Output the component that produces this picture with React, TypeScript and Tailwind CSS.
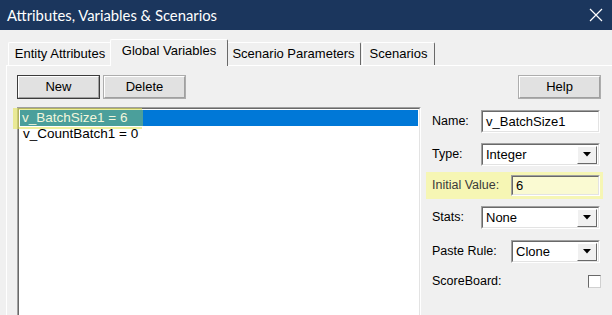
import React from 'react';

const sunken =
  'border border-t-[#a0a0a0] border-l-[#a0a0a0] border-r-white border-b-white';

const Btn = ({ label, isDefault = false }: { label: string; isDefault?: boolean }) => (
  <div
    className={`w-[83px] h-[24px] ${isDefault ? 'border border-[#3c3c3c]' : 'border border-[#adadad]'} bg-[#e1e1e1]`}
  >
    <div className="w-full h-full border border-t-white border-l-white border-r-[#a0a0a0] border-b-[#a0a0a0] flex items-center justify-center text-[13px] text-black">
      {label}
    </div>
  </div>
);

const Select = ({ value, width }: { value: string; width: string }) => (
  <div className={`${width} h-[23px] ${sunken} bg-white`}>
    <div className="w-full h-full border border-t-[#696969] border-l-[#696969] border-r-[#e3e3e3] border-b-[#e3e3e3] flex items-center justify-between pl-[3px] pr-[1px]">
      <span className="text-[13px] text-black">{value}</span>
      <div className="w-[20px] h-[18px] bg-[#f0f0f0] border border-t-white border-l-white border-r-[#696969] border-b-[#696969] flex items-center justify-center">
        <svg width="8" height="5" viewBox="0 0 8 5">
          <path d="M0 0 H8 L4 4.5 Z" fill="#000" />
        </svg>
      </div>
    </div>
  </div>
);

const TextBox = ({ value, width, bg = 'bg-white', h = 'h-[23px]' }: { value: string; width: string; bg?: string; h?: string }) => (
  <div className={`${width} ${h} ${sunken} ${bg}`}>
    <div className="w-full h-full border border-t-[#696969] border-l-[#696969] border-r-[#e3e3e3] border-b-[#e3e3e3] flex items-center pl-[3px]">
      <span className="text-[13px] text-black">{value}</span>
    </div>
  </div>
);

const Tab = ({ label, width, selected = false }: { label: string; width: string; selected?: boolean }) => (
  <div
    className={`${width} ${selected ? 'h-[27px] -mb-px z-10 -mx-[2px] pb-[4px]' : 'h-[23px] pb-[1px]'} bg-[#f0f0f0] border-t border-l border-white border-r border-r-[#696969] rounded-t-[2px] flex items-center justify-center text-[13px] text-black`}
  >
    {label}
  </div>
);

export default function App() {
  return (
    <div
      className="w-[612px] h-[315px] overflow-hidden bg-[#f0f0f0] flex flex-col"
      style={{ fontFamily: '"Liberation Sans", Arial, sans-serif' }}
    >
      <div className="h-[30px] shrink-0 bg-[#1b365d] flex items-center justify-between pl-[7px] pr-[9px]">
        <span className="text-white text-[14.8px]" style={{ fontFamily: 'Lato, "Noto Sans", sans-serif' }}>
          Attributes, Variables &amp; Scenarios
        </span>
        <svg width="14" height="14" viewBox="0 0 14 14">
          <path d="M1 1 L13 13 M13 1 L1 13" stroke="#fff" strokeWidth="1.2" />
        </svg>
      </div>

      <div className="flex-1 pl-[6px] pt-[9px] flex flex-col">
        <div className="flex items-end pl-[2px] relative">
          <Tab label="Entity Attributes" width="w-[104px]" />
          <Tab label="Global Variables" width="w-[118px]" selected />
          <Tab label="Scenario Parameters" width="w-[135px]" />
          <div className="w-[1px]" />
          <Tab label="Scenarios" width="w-[73px]" />
        </div>

        <div className="flex-1 border-t border-l border-white pl-[10px] pt-[9px]">
          <div className="w-[584px] flex justify-between">
            <div className="flex gap-[3px]">
              <Btn label="New" isDefault />
              <Btn label="Delete" />
            </div>
            <Btn label="Help" />
          </div>

          <div className="flex mt-[8px]">
            <div className="relative w-[404px] h-[220px] border border-t-[#a0a0a0] border-l-[#a0a0a0] border-r-white border-b-white">
              <div className="w-full h-full border border-t-[#696969] border-l-[#696969] border-r-[#e3e3e3] border-b-[#e3e3e3] bg-white pt-px pl-px pr-px">
                <div className="h-[16px] flex bg-[#0078d7] text-[13.5px] leading-[16px]">
                  <div className="w-[123px] bg-[#4b9f9b] pl-[2px] text-[#f2f6dc]">v_BatchSize1 = 6</div>
                </div>
                <div className="h-[16px] pl-[3px] text-[13.5px] leading-[16px] text-black">v_CountBatch1 = 0</div>
              </div>
              <div className="absolute -left-[5px] top-0 w-[129px] h-[21px] border-y-2 border-l-[6px] border-r-0 border-[#e4e45a]/60 pointer-events-none" />
            </div>

            <div className="ml-[5px] w-[177px] flex flex-col pt-[3px]">
              <div className="flex items-center justify-between pl-[6px] pr-[3px]">
                <span className="text-[12.5px] text-black">Name:</span>
                <TextBox value="v_BatchSize1" width="w-[119px]" />
              </div>
              <div className="flex items-center justify-between pl-[6px] pr-[3px] mt-[10px]">
                <span className="text-[12.5px] text-black">Type:</span>
                <Select value="Integer" width="w-[119px]" />
              </div>
              <div className="flex items-center justify-between pl-[6px] pr-[3px] mt-[6px] h-[27px] bg-[#f6f6b4]">
                <span className="text-[12.5px] text-[#3a3a3a]">Initial Value:</span>
                <TextBox value="6" width="w-[89px]" h="h-[21px]" bg="bg-[#fafad2]" />
              </div>
              <div className="flex items-center justify-between pl-[6px] pr-[3px] mt-[7px]">
                <span className="text-[12.5px] text-black">Stats:</span>
                <Select value="None" width="w-[119px]" />
              </div>
              <div className="flex items-center justify-between pl-[6px] pr-[3px] mt-[11px]">
                <span className="text-[12.5px] text-black">Paste Rule:</span>
                <Select value="Clone" width="w-[89px]" />
              </div>
              <div className="flex items-center justify-between pl-[6px] pr-[2px] mt-[9px]">
                <span className="text-[12.5px] text-black">ScoreBoard:</span>
                <div className="w-[13px] h-[13px] bg-white border border-t-[#696969] border-l-[#696969] border-r-[#d0d0d0] border-b-[#d0d0d0]" />
              </div>
            </div>
          </div>
        </div>
      </div>
    </div>
  );
}
